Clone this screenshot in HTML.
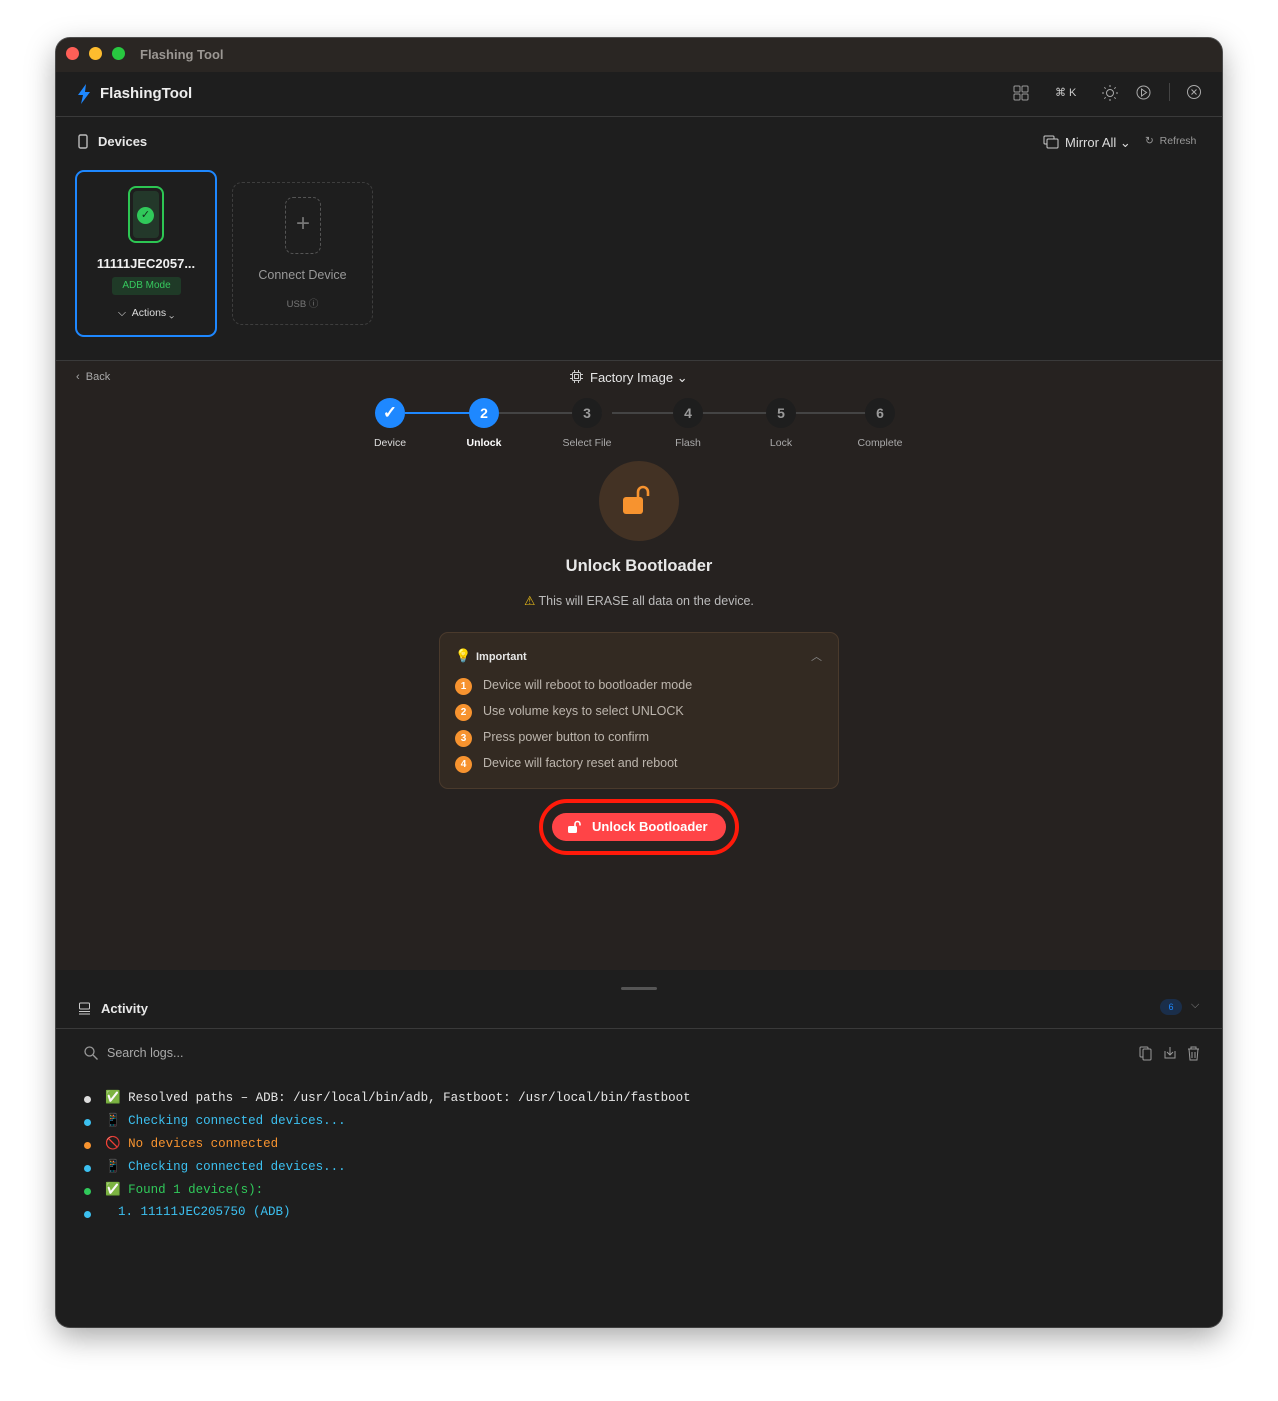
<!DOCTYPE html>
<html><head><meta charset="utf-8"><style>
*{box-sizing:border-box;margin:0;padding:0}
body{width:1278px;height:1401px;background:#fff;font-family:"Liberation Sans",sans-serif;position:relative;overflow:hidden;color:#e6e6e6}
.win{position:absolute;left:56px;top:38px;width:1166px;height:1289px;border-radius:14px;overflow:hidden;background:#1e1e1e;box-shadow:0 10px 30px rgba(0,0,0,.35),0 0 0 1px #555}
.abs{position:absolute}
.tb{left:0;top:0;width:1166px;height:34px;background:#2a2623}
.dot{width:13px;height:13px;border-radius:50%;top:9px}
.hdr{left:0;top:34px;width:1166px;height:45px;background:#1e1e1e;border-bottom:1px solid #3a3a3a}
.main{left:0;top:322px;width:1166px;height:610px;background:#262220;border-top:1px solid #3a3a3a}
.act{left:0;top:932px;width:1166px;height:357px;background:#1e1e1e}
.mono{font-family:"Liberation Mono",monospace;font-size:12.5px}
.step{width:30px;height:30px;border-radius:50%;top:37px;text-align:center;line-height:30px;font-weight:bold;font-size:14px;color:#9a9a9a;background:#1e1e1e}
.sl{top:76px;font-size:10.5px;color:#aaa;width:100px;text-align:center}
.ln{height:2px;top:51px;background:#444}
.num{width:17px;height:17px;border-radius:50%;background:#f7932f;color:#fff;font-size:10px;font-weight:bold;text-align:center;line-height:17px}
.it{font-size:12.5px;color:#bdb6ae}
.ld{width:7px;height:7px;border-radius:50%;left:28px}
</style></head><body>
<div class="win">
 <div class="abs tb">
  <div class="abs dot" style="left:10px;background:#ff5f57"></div>
  <div class="abs dot" style="left:33px;background:#febc2e"></div>
  <div class="abs dot" style="left:56px;background:#28c840"></div>
  <div class="abs" style="left:84px;top:9px;font-size:13px;font-weight:bold;color:#9b9793">Flashing Tool</div>
 </div>
 <div class="abs hdr">
  <svg class="abs" style="left:20px;top:11px" width="16" height="22" viewBox="0 0 16 22"><path d="M10 1L2 12h5l-2 9 9-12H9z" fill="#1e88ff"/></svg>
  <div class="abs" style="left:44px;top:13px;font-size:15px;font-weight:bold;color:#eee">FlashingTool</div>
  <svg class="abs" style="left:957px;top:13px" width="16" height="16" viewBox="0 0 16 16" fill="none" stroke="#999"><rect x="1" y="1" width="6" height="6" rx="1"/><rect x="9" y="1" width="6" height="6" rx="1"/><rect x="1" y="9" width="6" height="6" rx="1"/><rect x="9" y="9" width="6" height="6" rx="1"/></svg>
  <div class="abs" style="left:999px;top:14px;font-size:11px;color:#ccc">⌘ K</div>
  <svg class="abs" style="left:1046px;top:13px" width="16" height="16" viewBox="0 0 16 16" fill="none" stroke="#aaa"><circle cx="8" cy="8" r="3.5"/><path d="M8 0v2M8 14v2M0 8h2M14 8h2M2.3 2.3l1.4 1.4M12.3 12.3l1.4 1.4M2.3 13.7l1.4-1.4M12.3 3.7l1.4-1.4"/></svg>
  <svg class="abs" style="left:1079px;top:12px" width="17" height="17" viewBox="0 0 17 17" fill="none" stroke="#aaa"><circle cx="8.5" cy="8.5" r="6.5"/><path d="M6.5 5l5 3.5-5 3.5z"/></svg>
  <div class="abs" style="left:1113px;top:11px;width:1px;height:18px;background:#444"></div>
  <svg class="abs" style="left:1130px;top:12px" width="16" height="16" viewBox="0 0 16 16" fill="none" stroke="#aaa"><circle cx="8" cy="8" r="6.5"/><path d="M5.5 5.5l5 5M10.5 5.5l-5 5"/></svg>
 </div>
 <svg class="abs" style="left:22px;top:96px" width="10" height="15" viewBox="0 0 10 15" fill="none" stroke="#bbb" stroke-width="1.4"><rect x="1" y="1" width="8" height="13" rx="1.5"/></svg>
 <div class="abs" style="left:42px;top:96px;font-size:13px;font-weight:bold;color:#e8e8e8">Devices</div>
 <svg class="abs" style="left:987px;top:97px" width="16" height="14" viewBox="0 0 16 14" fill="none" stroke="#ccc"><rect x="1" y="1" width="10" height="8" rx="1"/><rect x="4" y="4" width="11" height="9" rx="1" fill="#1e1e1e"/></svg>
 <div class="abs" style="left:1009px;top:97px;font-size:13px;color:#ddd">Mirror All ⌄</div>
 <div class="abs" style="left:1089px;top:97px;font-size:10.5px;color:#999">↻ &nbsp;Refresh</div>
 <div class="abs" style="left:19px;top:132px;width:142px;height:167px;border:2px solid #1e88ff;border-radius:9px;background:#1e1e1e">
  <div class="abs" style="left:51px;top:14px;width:36px;height:57px;border:2px solid #2dc653;border-radius:8px;padding:3px"><div style="width:100%;height:100%;background:#23382a;border-radius:4px"></div></div>
  <div class="abs" style="left:60px;top:35px;width:17px;height:17px;border-radius:50%;background:#30c95a;color:#10301a;font-size:11px;text-align:center;line-height:17px">✓</div>
  <div class="abs" style="left:0;top:84px;width:138px;text-align:center;font-size:13px;font-weight:bold;color:#f0f0f0">11111JEC2057...</div>
  <div class="abs" style="left:35px;top:105px;width:69px;height:18px;background:#1f3a27;border-radius:3px;text-align:center;font-size:10px;line-height:18px;color:#36c95e">ADB Mode</div>
  <div class="abs" style="left:0;top:135px;width:138px;text-align:center;font-size:10.5px;color:#ddd">⌵ &nbsp;Actions ⌄</div>
 </div>
 <div class="abs" style="left:176px;top:144px;width:141px;height:143px;border:1.5px dashed #3e3e3e;border-radius:10px">
  <div class="abs" style="left:52px;top:14px;width:36px;height:57px;border:1.5px dashed #555;border-radius:8px;text-align:center;line-height:52px;font-size:24px;color:#777">+</div>
  <div class="abs" style="left:0;top:85px;width:139px;text-align:center;font-size:12.5px;color:#999">Connect Device</div>
  <div class="abs" style="left:0;top:113px;width:139px;text-align:center;font-size:9.5px;color:#777">USB ⓘ</div>
 </div>
 <div class="abs main">
  <div class="abs" style="left:20px;top:10px;font-size:11px;color:#aaa">‹ &nbsp;Back</div>
  <svg class="abs" style="left:514px;top:9px" width="13" height="13" viewBox="0 0 13 13" fill="none" stroke="#ccc"><rect x="2.5" y="2.5" width="8" height="8" rx="1"/><rect x="4.5" y="4.5" width="4" height="4"/><path d="M4.5 0v2M8.5 0v2M4.5 11v2M8.5 11v2M0 4.5h2M0 8.5h2M11 4.5h2M11 8.5h2"/></svg>
  <div class="abs" style="left:534px;top:9px;font-size:13px;color:#e6e6e6">Factory Image ⌄</div>
  <div class="abs ln" style="left:349px;width:80px;background:#1e88ff"></div>
  <div class="abs ln" style="left:443px;width:103px"></div>
  <div class="abs ln" style="left:556px;width:97px"></div>
  <div class="abs ln" style="left:650px;width:95px"></div>
  <div class="abs ln" style="left:740px;width:97px"></div>
  <div class="abs step" style="left:319px;background:#1e88ff;color:#fff;font-size:17px">✓</div>
  <div class="abs step" style="left:413px;background:#1e88ff;color:#fff">2</div>
  <div class="abs step" style="left:516px">3</div>
  <div class="abs step" style="left:617px">4</div>
  <div class="abs step" style="left:710px">5</div>
  <div class="abs step" style="left:809px">6</div>
  <div class="abs sl" style="left:284px;color:#ddd">Device</div>
  <div class="abs sl" style="left:378px;color:#fff;font-weight:bold">Unlock</div>
  <div class="abs sl" style="left:481px">Select File</div>
  <div class="abs sl" style="left:582px">Flash</div>
  <div class="abs sl" style="left:675px">Lock</div>
  <div class="abs sl" style="left:774px">Complete</div>
  <div class="abs" style="left:543px;top:100px;width:80px;height:80px;border-radius:50%;background:#433224"></div>
  <svg class="abs" style="left:566px;top:123px" width="34" height="34" viewBox="0 0 34 34"><rect x="1" y="13" width="20" height="17" rx="3" fill="#f7932f"/><path d="M16 13V8a5 5 0 0 1 10 0v4" fill="none" stroke="#f7932f" stroke-width="2.6"/></svg>
  <div class="abs" style="left:0;top:196px;width:1166px;text-align:center;font-size:16.5px;font-weight:bold;color:#e8e8e8">Unlock Bootloader</div>
  <div class="abs" style="left:0;top:232px;width:1166px;text-align:center;font-size:12.5px;color:#bbb"><span style="color:#f5c518">⚠</span> This will ERASE all data on the device.</div>
  <div class="abs" style="left:383px;top:271px;width:400px;height:157px;border:1px solid #4a3a2c;border-radius:9px;background:#332a22">
   <div class="abs" style="left:15px;top:15px;color:#f7932f;font-size:13px">💡</div>
   <div class="abs" style="left:36px;top:18px;font-size:11px;font-weight:bold;color:#e6e6e6">Important</div>
   <div class="abs" style="left:371px;top:15px;font-size:11px;color:#888">︿</div>
   <div class="abs num" style="left:15px;top:45px">1</div><div class="abs it" style="left:43px;top:45px">Device will reboot to bootloader mode</div>
   <div class="abs num" style="left:15px;top:71px">2</div><div class="abs it" style="left:43px;top:71px">Use volume keys to select UNLOCK</div>
   <div class="abs num" style="left:15px;top:97px">3</div><div class="abs it" style="left:43px;top:97px">Press power button to confirm</div>
   <div class="abs num" style="left:15px;top:123px">4</div><div class="abs it" style="left:43px;top:123px">Device will factory reset and reboot</div>
  </div>
  <div class="abs" style="left:483px;top:438px;width:200px;height:56px;border:4px solid #ff1a0a;border-radius:28px"></div>
  <div class="abs" style="left:496px;top:452px;width:174px;height:28px;background:#ff4447;border-radius:14px;color:#fff;font-size:13px;font-weight:bold;line-height:28px;padding-left:40px">Unlock Bootloader</div>
  <svg class="abs" style="left:511px;top:459px" width="16" height="14" viewBox="0 0 16 14"><rect x="1" y="6" width="9" height="7" rx="1.5" fill="#fff"/><path d="M8 6V4a2.5 2.5 0 0 1 5 0v1.5" fill="none" stroke="#fff" stroke-width="1.6"/></svg>
 </div>
 <div class="abs act">
  <div class="abs" style="left:565px;top:17px;width:36px;height:3px;border-radius:2px;background:#555"></div>
  <svg class="abs" style="left:22px;top:32px" width="13" height="13" viewBox="0 0 13 13" fill="none" stroke="#ccc"><rect x="1.5" y="1" width="10" height="6" rx="1"/><path d="M1 9.5h11M1 12h11"/></svg>
  <div class="abs" style="left:45px;top:31px;font-size:13px;font-weight:bold;color:#e8e8e8">Activity</div>
  <div class="abs" style="left:1104px;top:29px;width:22px;height:16px;border-radius:8px;background:#1a2e4a;color:#1e88ff;font-size:9px;text-align:center;line-height:16px">6</div>
  <div class="abs" style="left:1135px;top:29px;font-size:11px;color:#888">⌵</div>
  <div class="abs" style="left:0;top:58px;width:1166px;height:1px;background:#3a3a3a"></div>
  <svg class="abs" style="left:28px;top:76px" width="14" height="14" viewBox="0 0 14 14" fill="none" stroke="#999" stroke-width="1.3"><circle cx="5.5" cy="5.5" r="4.5"/><path d="M9 9l4.5 4.5"/></svg>
  <div class="abs" style="left:51px;top:76px;font-size:12.5px;color:#aaa">Search logs...</div>
  <svg class="abs" style="left:1083px;top:75px" width="66" height="16" viewBox="0 0 66 16" fill="none" stroke="#999"><rect x="1" y="2" width="8" height="10" rx="1"/><rect x="4" y="4" width="8" height="11" rx="1" fill="#1e1e1e"/><path d="M26 6v7h10V6M31 2v8M28 7l3 3 3-3"/><path d="M49 4h11M52 4V2h5v2M50 4l1 11h7l1-11M53 7v6M56 7v6"/></svg>
  <div class="abs ld" style="top:126px;background:#ddd"></div>
  <div class="abs mono" style="left:49px;top:120px;color:#e6e6e6">✅ Resolved paths – ADB: /usr/local/bin/adb, Fastboot: /usr/local/bin/fastboot</div>
  <div class="abs ld" style="top:149px;background:#3cc0f0"></div>
  <div class="abs mono" style="left:49px;top:143px;color:#3cc0f0">📱 Checking connected devices...</div>
  <div class="abs ld" style="top:172px;background:#f7932f"></div>
  <div class="abs mono" style="left:49px;top:166px;color:#f7932f">🚫 No devices connected</div>
  <div class="abs ld" style="top:195px;background:#3cc0f0"></div>
  <div class="abs mono" style="left:49px;top:189px;color:#3cc0f0">📱 Checking connected devices...</div>
  <div class="abs ld" style="top:218px;background:#30c95a"></div>
  <div class="abs mono" style="left:49px;top:212px;color:#30c95a">✅ Found 1 device(s):</div>
  <div class="abs ld" style="top:241px;background:#3cc0f0"></div>
  <div class="abs mono" style="left:62px;top:235px;color:#3cc0f0">1. 11111JEC205750 (ADB)</div>
 </div>
</div>
</body></html>
